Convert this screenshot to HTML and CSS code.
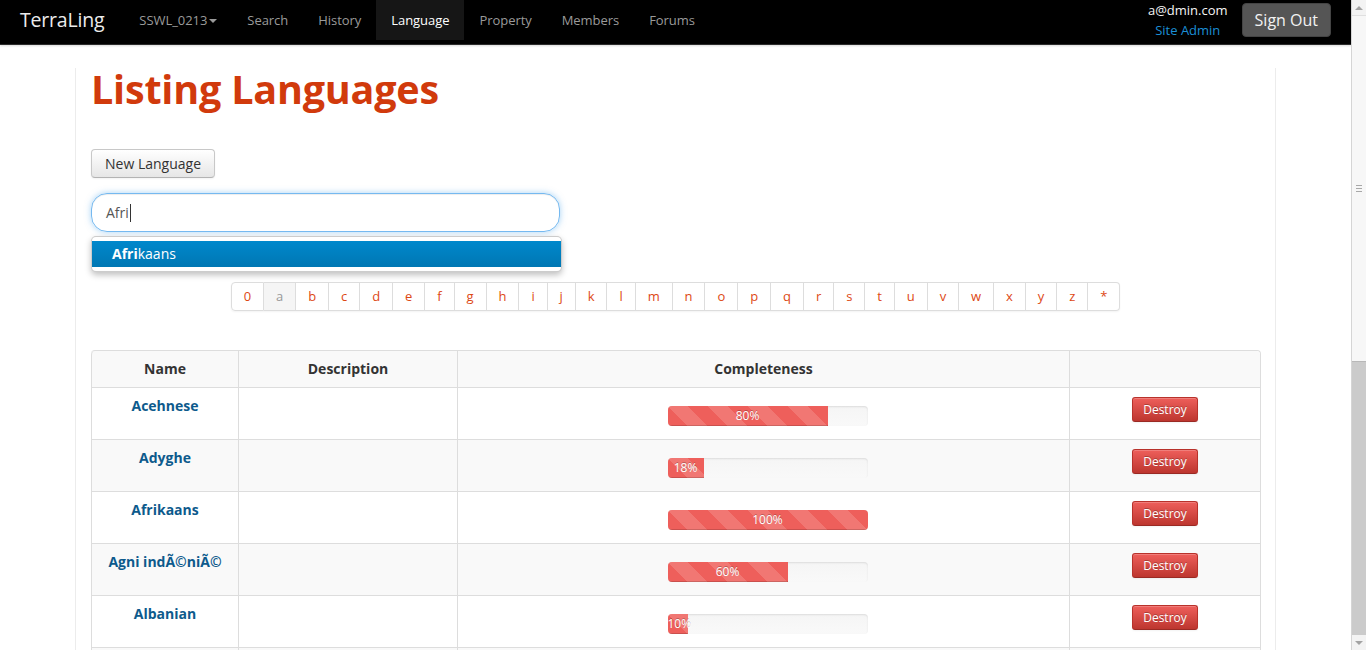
FILE: index.html
```html
<!DOCTYPE html>
<html lang="en">
<head>
<meta charset="utf-8">
<title>TerraLing - Listing Languages</title>
<link rel="stylesheet" href="styles.css">
</head>
<body>
<header class="navbar">
  <a class="brand" href="#">TerraLing</a>
  <nav class="nav">
    <a class="nav-item" href="#">SSWL_0213<span class="caret"></span></a>
    <a class="nav-item" href="#">Search</a>
    <a class="nav-item" href="#">History</a>
    <a class="nav-item active" href="#">Language</a>
    <a class="nav-item" href="#">Property</a>
    <a class="nav-item" href="#">Members</a>
    <a class="nav-item" href="#">Forums</a>
  </nav>
  <div class="user">
    <div class="user-info">
      <div class="user-email">a@dmin.com</div>
      <a class="user-role" href="#">Site Admin</a>
    </div>
    <a class="btn-signout" href="#">Sign Out</a>
  </div>
</header>

<main class="container">
  <h1 class="title">Listing Languages</h1>
  <div class="actions">
    <a class="btn" href="#">New Language</a>
  </div>
  <div class="search">
    <div class="search-query" role="textbox">Afri<span class="caret-line"></span></div>
    <ul class="typeahead">
      <li class="typeahead-item active"><strong>Afri</strong>kaans</li>
    </ul>
  </div>
  <div class="pagination">
    <ul>
      <li><a href="#">0</a></li>
      <li class="current"><a href="#">a</a></li>
      <li><a href="#">b</a></li>
      <li><a href="#">c</a></li>
      <li><a href="#">d</a></li>
      <li><a href="#">e</a></li>
      <li><a href="#">f</a></li>
      <li><a href="#">g</a></li>
      <li><a href="#">h</a></li>
      <li><a href="#">i</a></li>
      <li><a href="#">j</a></li>
      <li><a href="#">k</a></li>
      <li><a href="#">l</a></li>
      <li><a href="#">m</a></li>
      <li><a href="#">n</a></li>
      <li><a href="#">o</a></li>
      <li><a href="#">p</a></li>
      <li><a href="#">q</a></li>
      <li><a href="#">r</a></li>
      <li><a href="#">s</a></li>
      <li><a href="#">t</a></li>
      <li><a href="#">u</a></li>
      <li><a href="#">v</a></li>
      <li><a href="#">w</a></li>
      <li><a href="#">x</a></li>
      <li><a href="#">y</a></li>
      <li><a href="#">z</a></li>
      <li><a href="#">*</a></li>
    </ul>
  </div>

  <table class="table">
    <colgroup>
      <col class="col-name"><col class="col-desc"><col class="col-comp"><col class="col-act">
    </colgroup>
    <tbody>
      <tr class="head">
        <th>Name</th><th>Description</th><th>Completeness</th><th></th>
      </tr>
      <tr>
        <td><a class="lang" href="#">Acehnese</a></td><td></td>
        <td><div class="progress-wrap"><div class="progress"><div class="bar" style="width:80%">80%</div></div></div></td>
        <td><a class="btn-danger" href="#">Destroy</a></td>
      </tr>
      <tr>
        <td><a class="lang" href="#">Adyghe</a></td><td></td>
        <td><div class="progress-wrap"><div class="progress"><div class="bar" style="width:18%">18%</div></div></div></td>
        <td><a class="btn-danger" href="#">Destroy</a></td>
      </tr>
      <tr>
        <td><a class="lang" href="#">Afrikaans</a></td><td></td>
        <td><div class="progress-wrap"><div class="progress"><div class="bar" style="width:100%">100%</div></div></div></td>
        <td><a class="btn-danger" href="#">Destroy</a></td>
      </tr>
      <tr>
        <td><a class="lang" href="#">Agni indÃ©niÃ©</a></td><td></td>
        <td><div class="progress-wrap"><div class="progress"><div class="bar" style="width:60%">60%</div></div></div></td>
        <td><a class="btn-danger" href="#">Destroy</a></td>
      </tr>
      <tr>
        <td><a class="lang" href="#">Albanian</a></td><td></td>
        <td><div class="progress-wrap"><div class="progress"><div class="bar" style="width:10%">10%</div></div></div></td>
        <td><a class="btn-danger" href="#">Destroy</a></td>
      </tr>
      <tr>
        <td><a class="lang" href="#">Amharic</a></td><td></td>
        <td><div class="progress-wrap"><div class="progress"><div class="bar" style="width:40%">40%</div></div></div></td>
        <td><a class="btn-danger" href="#">Destroy</a></td>
      </tr>
      <tr>
        <td><a class="lang" href="#">Arabic</a></td><td></td>
        <td><div class="progress-wrap"><div class="progress"><div class="bar" style="width:90%">90%</div></div></div></td>
        <td><a class="btn-danger" href="#">Destroy</a></td>
      </tr>
      <tr>
        <td><a class="lang" href="#">Armenian</a></td><td></td>
        <td><div class="progress-wrap"><div class="progress"><div class="bar" style="width:30%">30%</div></div></div></td>
        <td><a class="btn-danger" href="#">Destroy</a></td>
      </tr>
      <tr>
        <td><a class="lang" href="#">Azerbaijani</a></td><td></td>
        <td><div class="progress-wrap"><div class="progress"><div class="bar" style="width:50%">50%</div></div></div></td>
        <td><a class="btn-danger" href="#">Destroy</a></td>
      </tr>
      <tr>
        <td><a class="lang" href="#">Basque</a></td><td></td>
        <td><div class="progress-wrap"><div class="progress"><div class="bar" style="width:70%">70%</div></div></div></td>
        <td><a class="btn-danger" href="#">Destroy</a></td>
      </tr>
      <tr>
        <td><a class="lang" href="#">Belarusian</a></td><td></td>
        <td><div class="progress-wrap"><div class="progress"><div class="bar" style="width:20%">20%</div></div></div></td>
        <td><a class="btn-danger" href="#">Destroy</a></td>
      </tr>
      <tr>
        <td><a class="lang" href="#">Bengali</a></td><td></td>
        <td><div class="progress-wrap"><div class="progress"><div class="bar" style="width:60%">60%</div></div></div></td>
        <td><a class="btn-danger" href="#">Destroy</a></td>
      </tr>
      <tr>
        <td><a class="lang" href="#">Breton</a></td><td></td>
        <td><div class="progress-wrap"><div class="progress"><div class="bar" style="width:15%">15%</div></div></div></td>
        <td><a class="btn-danger" href="#">Destroy</a></td>
      </tr>
      <tr>
        <td><a class="lang" href="#">Bulgarian</a></td><td></td>
        <td><div class="progress-wrap"><div class="progress"><div class="bar" style="width:85%">85%</div></div></div></td>
        <td><a class="btn-danger" href="#">Destroy</a></td>
      </tr>
    </tbody>
  </table>
</main>

<div class="scrollbar" aria-hidden="true">
  <div class="sb-btn"><span class="sb-arrow-up"></span></div>
  <div class="sb-thumb"><span class="sb-grip"></span></div>
  <div class="sb-track"></div>
  <div class="sb-btn"><span class="sb-arrow-down"></span></div>
</div>
</body>
</html>
```

FILE: styles.css
```css
html, body {
  margin: 0;
  padding: 0;
  background: #fff;
}
body {
  font-family: "Open Sans", "Liberation Sans", sans-serif;
  font-size: 14px;
  line-height: 20px;
  color: #333;
  margin-right: 15px;
}
a { text-decoration: none; }

/* Fake browser scrollbar (overlay) */
.scrollbar {
  position: fixed;
  top: 0;
  right: 0;
  width: 15px;
  height: 100vh;
  display: flex;
  flex-direction: column;
  background: #fafafa;
  border-left: 1px solid #d5d5d5;
  box-sizing: border-box;
}
.sb-btn {
  height: 15px;
  display: flex;
  align-items: center;
  justify-content: center;
  background: #f3f3f3;
}
.sb-arrow-up, .sb-arrow-down {
  width: 0;
  height: 0;
  border-left: 4px solid transparent;
  border-right: 4px solid transparent;
}
.sb-arrow-up { border-bottom: 4px solid #a3a3a3; }
.sb-arrow-down { border-top: 4px solid #a3a3a3; }
.sb-thumb {
  height: 345px;
  display: flex;
  align-items: center;
  justify-content: center;
  background: #f7f7f7;
  border-top: 1px solid #e0e0e0;
  border-bottom: 1px solid #b8b8b8;
}
.sb-grip {
  width: 6px;
  height: 5px;
  border-top: 1px solid #a8a8a8;
  border-bottom: 1px solid #a8a8a8;
  position: relative;
}
.sb-grip::after {
  content: "";
  position: absolute;
  left: 0;
  right: 0;
  top: 2px;
  border-top: 1px solid #a8a8a8;
}
.sb-track {
  flex: 1;
  background: #cbcbcb;
}

/* Navbar */
.navbar {
  display: flex;
  align-items: flex-start;
  height: 44px;
  background: #000;
  border-bottom: 1px solid #2b2b2b;
  box-shadow: 0 1px 2px rgba(0,0,0,.15);
  padding: 0 20px 0 0;
}
.brand {
  display: block;
  padding: 10px 20px 10px 20px;
  font-size: 19.5px;
  line-height: 20px;
  color: #ececec;
  letter-spacing: -0.2px;
}
.nav {
  display: flex;
}
.nav-item {
  display: block;
  padding: 10px 15px;
  font-size: 13px;
  line-height: 20px;
  color: #9a9a9a;
  letter-spacing: -0.05px;
}
.nav-item.active {
  background: #161616;
  color: #fff;
}
.caret {
  display: inline-block;
  width: 0;
  height: 0;
  margin-left: 2px;
  vertical-align: middle;
  border-top: 4px solid #9a9a9a;
  border-left: 4px solid transparent;
  border-right: 4px solid transparent;
  position: relative;
  top: -1px;
}
.user {
  margin-left: auto;
  display: flex;
  align-items: flex-start;
  gap: 14px;
}
.user-info {
  text-align: center;
  font-size: 13px;
  line-height: 20px;
}
.user-email {
  color: #f5f5f5;
}
.user-role {
  display: block;
  color: #1b8fd6;
}
.btn-signout {
  display: block;
  margin-top: 3px;
  padding: 6px 12px;
  font-size: 16px;
  line-height: 20px;
  color: #f2f2f2;
  background: #555;
  border: 1px solid #444;
  border-radius: 4px;
}

/* Container */
.container {
  width: 1169px;
  margin: 0 auto;
  padding: 0 15px 40px 15px;
  border-left: 1px solid #ececec;
  border-right: 1px solid #ececec;
}
.title {
  margin: 23px 0 0;
  font-size: 39.5px;
  line-height: 42px;
  font-weight: 700;
  color: #d13a0c;
  letter-spacing: -0.2px;
}
.actions {
  margin-top: 39px;
  display: flex;
}
.btn {
  display: block;
  padding: 4px 13px;
  font-size: 14px;
  line-height: 19px;
  color: #333;
  background: linear-gradient(#ffffff, #e6e6e6);
  border: 1px solid #c8c8c8;
  border-bottom-color: #b3b3b3;
  border-radius: 4px;
  box-shadow: inset 0 1px 0 rgba(255,255,255,.2), 0 1px 2px rgba(0,0,0,.05);
}

/* Search */
.search {
  position: relative;
  margin-top: 15px;
  width: 469px;
}
.search-query {
  box-sizing: border-box;
  height: 39px;
  padding: 9px 14px;
  font-size: 14px;
  line-height: 20px;
  color: #555;
  border: 1px solid rgba(82,168,236,.8);
  border-radius: 16px;
  box-shadow: inset 0 1px 1px rgba(0,0,0,.075), 0 0 6px rgba(82,168,236,.5);
}
.caret-line {
  display: inline-block;
  width: 1px;
  height: 18px;
  background: #333;
  vertical-align: -4px;
  margin-left: 1px;
}
.typeahead {
  position: absolute;
  top: 43px;
  left: 0;
  width: 471px;
  box-sizing: border-box;
  margin: 0;
  padding: 4px 0;
  list-style: none;
  background: #fff;
  border: 1px solid rgba(0,0,0,.2);
  border-radius: 5px;
  box-shadow: 0 3px 6px rgba(0,0,0,.25);
  z-index: 10;
}
.typeahead-item {
  padding: 3px 20px;
  line-height: 20px;
  font-size: 14px;
  color: #333;
}
.typeahead-item.active {
  color: #fff;
  background: linear-gradient(#0088cc, #0077b3);
}

/* Pagination */
.pagination {
  margin-top: 50px;
  display: flex;
  justify-content: center;
}
.pagination ul {
  display: flex;
  margin: 0;
  padding: 0;
  list-style: none;
  border-radius: 4px;
  box-shadow: 0 1px 2px rgba(0,0,0,.05);
}
.pagination a {
  display: block;
  padding: 4px 12px;
  font-size: 13px;
  line-height: 19px;
  color: #dd4814;
  border: 1px solid #ddd;
  border-left-width: 0;
  letter-spacing: -0.1px;
}
.pagination li:first-child a {
  border-left-width: 1px;
  border-radius: 4px 0 0 4px;
}
.pagination li:last-child a {
  border-radius: 0 4px 4px 0;
}
.pagination .current a {
  background: #f5f5f5;
  color: #999;
}

/* Table */
.table {
  width: 100%;
  margin-top: 39px;
  table-layout: fixed;
  border-collapse: separate;
  border-spacing: 0;
  border: 1px solid #ddd;
  border-left-width: 0;
  border-radius: 4px;
}
.col-name { width: 147px; }
.col-desc { width: 219px; }
.col-comp { width: 612px; }
.col-act { width: 191px; }
.table th, .table td {
  padding: 8px;
  line-height: 20px;
  text-align: center;
  vertical-align: top;
  border-left: 1px solid #ddd;
  border-top: 1px solid #ddd;
}
.table td { height: 35px; }
.table tr:first-child th { border-top: 0; }
.table th {
  font-weight: 700;
  color: #333;
}
.table tr:nth-child(odd) th,
.table tr:nth-child(odd) td {
  background: #f9f9f9;
}
.table tr:first-child th:first-child { border-top-left-radius: 4px; }
.table tr:first-child th:last-child { border-top-right-radius: 4px; }
.table tr:last-child td:first-child { border-bottom-left-radius: 4px; }
.table tr:last-child td:last-child { border-bottom-right-radius: 4px; }
.lang {
  font-weight: 700;
  color: #0d5a8c;
}
.progress-wrap {
  display: flex;
  justify-content: center;
  padding: 10px 0 0 8px;
}
.progress {
  width: 200px;
  height: 20px;
  overflow: hidden;
  border-radius: 4px;
  background: linear-gradient(#f5f5f5, #f9f9f9);
  box-shadow: inset 0 1px 2px rgba(0,0,0,.1);
}
.bar {
  height: 20px;
  box-sizing: border-box;
  font-size: 12px;
  line-height: 20px;
  color: #fff;
  text-align: center;
  white-space: nowrap;
  text-shadow: 0 -1px 0 rgba(0,0,0,.25);
  background-color: #ee5f5b;
  background-image: linear-gradient(45deg, rgba(255,255,255,.15) 25%, transparent 25%, transparent 50%, rgba(255,255,255,.15) 50%, rgba(255,255,255,.15) 75%, transparent 75%, transparent);
  background-size: 40px 40px;
  box-shadow: inset 0 -1px 0 rgba(0,0,0,.15);
}
.btn-danger {
  display: inline-block;
  margin-top: 1px;
  padding: 3px 10px;
  font-size: 12px;
  line-height: 17px;
  color: #fff;
  text-shadow: 0 -1px 0 rgba(0,0,0,.25);
  background: linear-gradient(#ee5f5b, #bd362f);
  border: 1px solid #b8322b;
  border-bottom-color: #9a2a24;
  border-radius: 3px;
  box-shadow: inset 0 1px 0 rgba(255,255,255,.2), 0 1px 2px rgba(0,0,0,.05);
}
```
